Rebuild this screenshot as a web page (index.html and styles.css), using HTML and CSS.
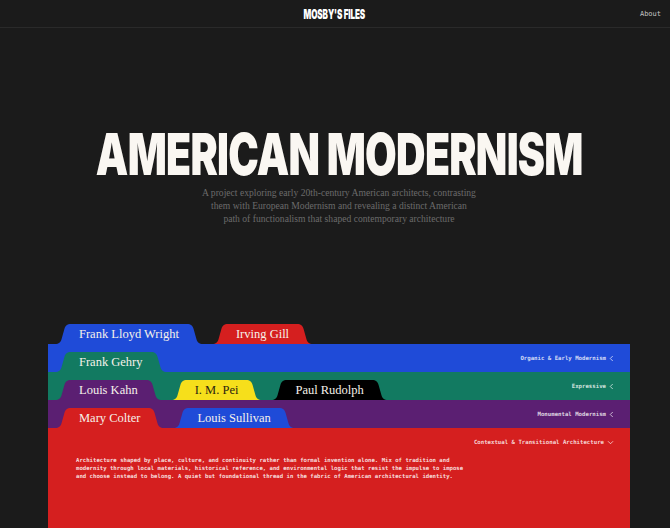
FILE: index.html
```html
<!DOCTYPE html>
<html lang="en">
<head>
<meta charset="utf-8">
<title>Mosby's Files — American Modernism</title>
<link rel="stylesheet" href="styles.css">
</head>
<body>
<header class="site-header">
  <div class="brand"><span class="brand-text">MOSBY'S FILES</span></div>
  <a class="about" href="#about">About</a>
</header>

<main class="page">
  <section class="hero">
    <h1 class="title"><span class="title-text">AMERICAN MODERNISM</span></h1>
    <p class="lede">A project exploring early 20th-century American architects, contrasting<br>them with European Modernism and revealing a distinct American<br>path of functionalism that shaped contemporary architecture</p>
  </section>

  <div class="stack">
    <section class="group c-blue">
      <div class="tabs">
        <span class="tab c-blue"><svg class="flare" viewBox="0 0 16 20"><path d="M0 20C4 20 5.6 18.2 6.6 15L9.4 5C10.4 1.8 12 0 16 0V20Z"/></svg><span class="name">Frank Lloyd Wright</span><svg class="flare" viewBox="0 0 16 20"><path d="M0 0C4 0 5.6 1.8 6.6 5L9.4 15C10.4 18.2 12 20 16 20H0Z"/></svg></span>
        <span class="tab c-red"><svg class="flare" viewBox="0 0 16 20"><path d="M0 20C4 20 5.6 18.2 6.6 15L9.4 5C10.4 1.8 12 0 16 0V20Z"/></svg><span class="name">Irving Gill</span><svg class="flare" viewBox="0 0 16 20"><path d="M0 0C4 0 5.6 1.8 6.6 5L9.4 15C10.4 18.2 12 20 16 20H0Z"/></svg></span>
      </div>
      <div class="bar"><span class="label">Organic &amp; Early Modernism</span><svg class="chev" viewBox="0 0 6 8"><path d="M4.5 1L1.5 4L4.5 7"/></svg></div>
    </section>

    <section class="group c-green">
      <div class="tabs">
        <span class="tab c-green"><svg class="flare" viewBox="0 0 16 20"><path d="M0 20C4 20 5.6 18.2 6.6 15L9.4 5C10.4 1.8 12 0 16 0V20Z"/></svg><span class="name">Frank Gehry</span><svg class="flare" viewBox="0 0 16 20"><path d="M0 0C4 0 5.6 1.8 6.6 5L9.4 15C10.4 18.2 12 20 16 20H0Z"/></svg></span>
      </div>
      <div class="bar"><span class="label">Expressive</span><svg class="chev" viewBox="0 0 6 8"><path d="M4.5 1L1.5 4L4.5 7"/></svg></div>
    </section>

    <section class="group c-purple">
      <div class="tabs">
        <span class="tab c-purple"><svg class="flare" viewBox="0 0 16 20"><path d="M0 20C4 20 5.6 18.2 6.6 15L9.4 5C10.4 1.8 12 0 16 0V20Z"/></svg><span class="name">Louis Kahn</span><svg class="flare" viewBox="0 0 16 20"><path d="M0 0C4 0 5.6 1.8 6.6 5L9.4 15C10.4 18.2 12 20 16 20H0Z"/></svg></span>
        <span class="tab c-yellow"><svg class="flare" viewBox="0 0 16 20"><path d="M0 20C4 20 5.6 18.2 6.6 15L9.4 5C10.4 1.8 12 0 16 0V20Z"/></svg><span class="name">I. M. Pei</span><svg class="flare" viewBox="0 0 16 20"><path d="M0 0C4 0 5.6 1.8 6.6 5L9.4 15C10.4 18.2 12 20 16 20H0Z"/></svg></span>
        <span class="tab c-black"><svg class="flare" viewBox="0 0 16 20"><path d="M0 20C4 20 5.6 18.2 6.6 15L9.4 5C10.4 1.8 12 0 16 0V20Z"/></svg><span class="name">Paul Rudolph</span><svg class="flare" viewBox="0 0 16 20"><path d="M0 0C4 0 5.6 1.8 6.6 5L9.4 15C10.4 18.2 12 20 16 20H0Z"/></svg></span>
      </div>
      <div class="bar"><span class="label">Monumental Modernism</span><svg class="chev" viewBox="0 0 6 8"><path d="M4.5 1L1.5 4L4.5 7"/></svg></div>
    </section>

    <section class="group c-red open">
      <div class="tabs">
        <span class="tab c-red"><svg class="flare" viewBox="0 0 16 20"><path d="M0 20C4 20 5.6 18.2 6.6 15L9.4 5C10.4 1.8 12 0 16 0V20Z"/></svg><span class="name">Mary Colter</span><svg class="flare" viewBox="0 0 16 20"><path d="M0 0C4 0 5.6 1.8 6.6 5L9.4 15C10.4 18.2 12 20 16 20H0Z"/></svg></span>
        <span class="tab c-blue"><svg class="flare" viewBox="0 0 16 20"><path d="M0 20C4 20 5.6 18.2 6.6 15L9.4 5C10.4 1.8 12 0 16 0V20Z"/></svg><span class="name">Louis Sullivan</span><svg class="flare" viewBox="0 0 16 20"><path d="M0 0C4 0 5.6 1.8 6.6 5L9.4 15C10.4 18.2 12 20 16 20H0Z"/></svg></span>
      </div>
      <div class="bar"><span class="label">Contextual &amp; Transitional Architecture</span><svg class="chev chev-down" viewBox="0 0 8 6"><path d="M1 1.5L4 4.5L7 1.5"/></svg></div>
      <div class="body">
        <p class="desc">Architecture shaped by place, culture, and continuity rather than formal invention alone. Mix of tradition and modernity through local materials, historical reference, and environmental logic that resist the impulse to impose and choose instead to belong. A quiet but foundational thread in the fabric of American architectural identity.</p>
      </div>
    </section>
  </div>
</main>
</body>
</html>
```

FILE: styles.css
```css
:root {
  --bg: #1b1b1b;
  --ink: #f6f1ea;
  --blue: #1f4bd8;
  --green: #127a61;
  --purple: #5b1f72;
  --red: #d51f1f;
  --yellow: #f6df1b;
  --black: #000000;
}

html, body {
  margin: 0;
  background: var(--bg);
  overflow: hidden;
}

body {
  font-family: "Liberation Serif", serif;
  color: var(--ink);
}

/* top bar */
.site-header {
  height: 27px;
  border-bottom: 1px solid #2a2a2a;
  display: flex;
  align-items: center;
  justify-content: center;
  padding: 0 9px 0 8px;
  position: relative;
}

.brand {
  display: flex;
  justify-content: center;
}

.brand-text {
  display: inline-block;
  font-family: Inter, sans-serif;
  font-weight: 900;
  font-size: 13.5px;
  letter-spacing: -0.2px;
  color: #ffffff;
  transform: scaleX(0.6);
}

.about {
  position: absolute;
  right: 9px;
  top: 9px;
  font-family: "DejaVu Sans Mono", monospace;
  font-size: 7px;
  line-height: 10px;
  color: #c4c4c4;
  text-decoration: none;
}

/* hero */
.page {
  padding-left: 8px;
}

.hero {
  margin-top: 101px;
  text-align: center;
}

.title {
  margin: 0;
  display: flex;
  justify-content: center;
  font-family: Inter, sans-serif;
  font-weight: 900;
  font-size: 58px;
  line-height: 50px;
  color: #faf7f2;
}

.title-text {
  flex: none;
  letter-spacing: -1px;
  transform: scaleX(0.705);
  white-space: nowrap;
}

.lede {
  margin: 7px auto 0;
  font-size: 9.6px;
  line-height: 13px;
  color: #6b6b6b;
}

/* stacked category folders */
.stack {
  width: 582px;
  margin: 99px auto 0;
}

.group + .group {
  margin-top: -20px;
}

.c-blue { --c: var(--blue); }
.c-green { --c: var(--green); }
.c-purple { --c: var(--purple); }
.c-red { --c: var(--red); }
.c-yellow { --c: var(--yellow); }
.c-black { --c: var(--black); }

.tabs {
  display: flex;
  gap: 9px;
  padding-left: 7px;
  height: 20px;
}

.tab {
  display: flex;
  height: 20px;
}

.flare {
  width: 16px;
  height: 20px;
  flex: none;
  fill: var(--c);
  display: block;
}

.name {
  background: var(--c);
  padding: 0 8px;
  font-size: 12.5px;
  line-height: 20px;
  white-space: nowrap;
  color: var(--ink);
}

.c-yellow .name {
  color: #2a2410;
}

.bar {
  height: 28px;
  background: var(--c);
  display: flex;
  align-items: center;
  justify-content: flex-end;
  gap: 3px;
  padding-right: 16px;
}

.label {
  font-family: "DejaVu Sans Mono", monospace;
  font-weight: 700;
  font-size: 5.7px;
  line-height: 8px;
  color: rgba(255, 255, 255, 0.82);
  white-space: nowrap;
}

.chev {
  width: 5px;
  height: 7px;
  fill: none;
  stroke: rgba(255, 255, 255, 0.8);
  stroke-width: 1;
}

.chev-down {
  width: 7px;
  height: 5px;
}

.body {
  background: var(--c);
  height: 120px;
  padding: 0 28px;
}

.desc {
  margin: 0;
  max-width: 116ch;
  font-family: "DejaVu Sans Mono", monospace;
  font-weight: 700;
  font-size: 5.65px;
  line-height: 8px;
  color: rgba(255, 255, 255, 0.85);
}
```
